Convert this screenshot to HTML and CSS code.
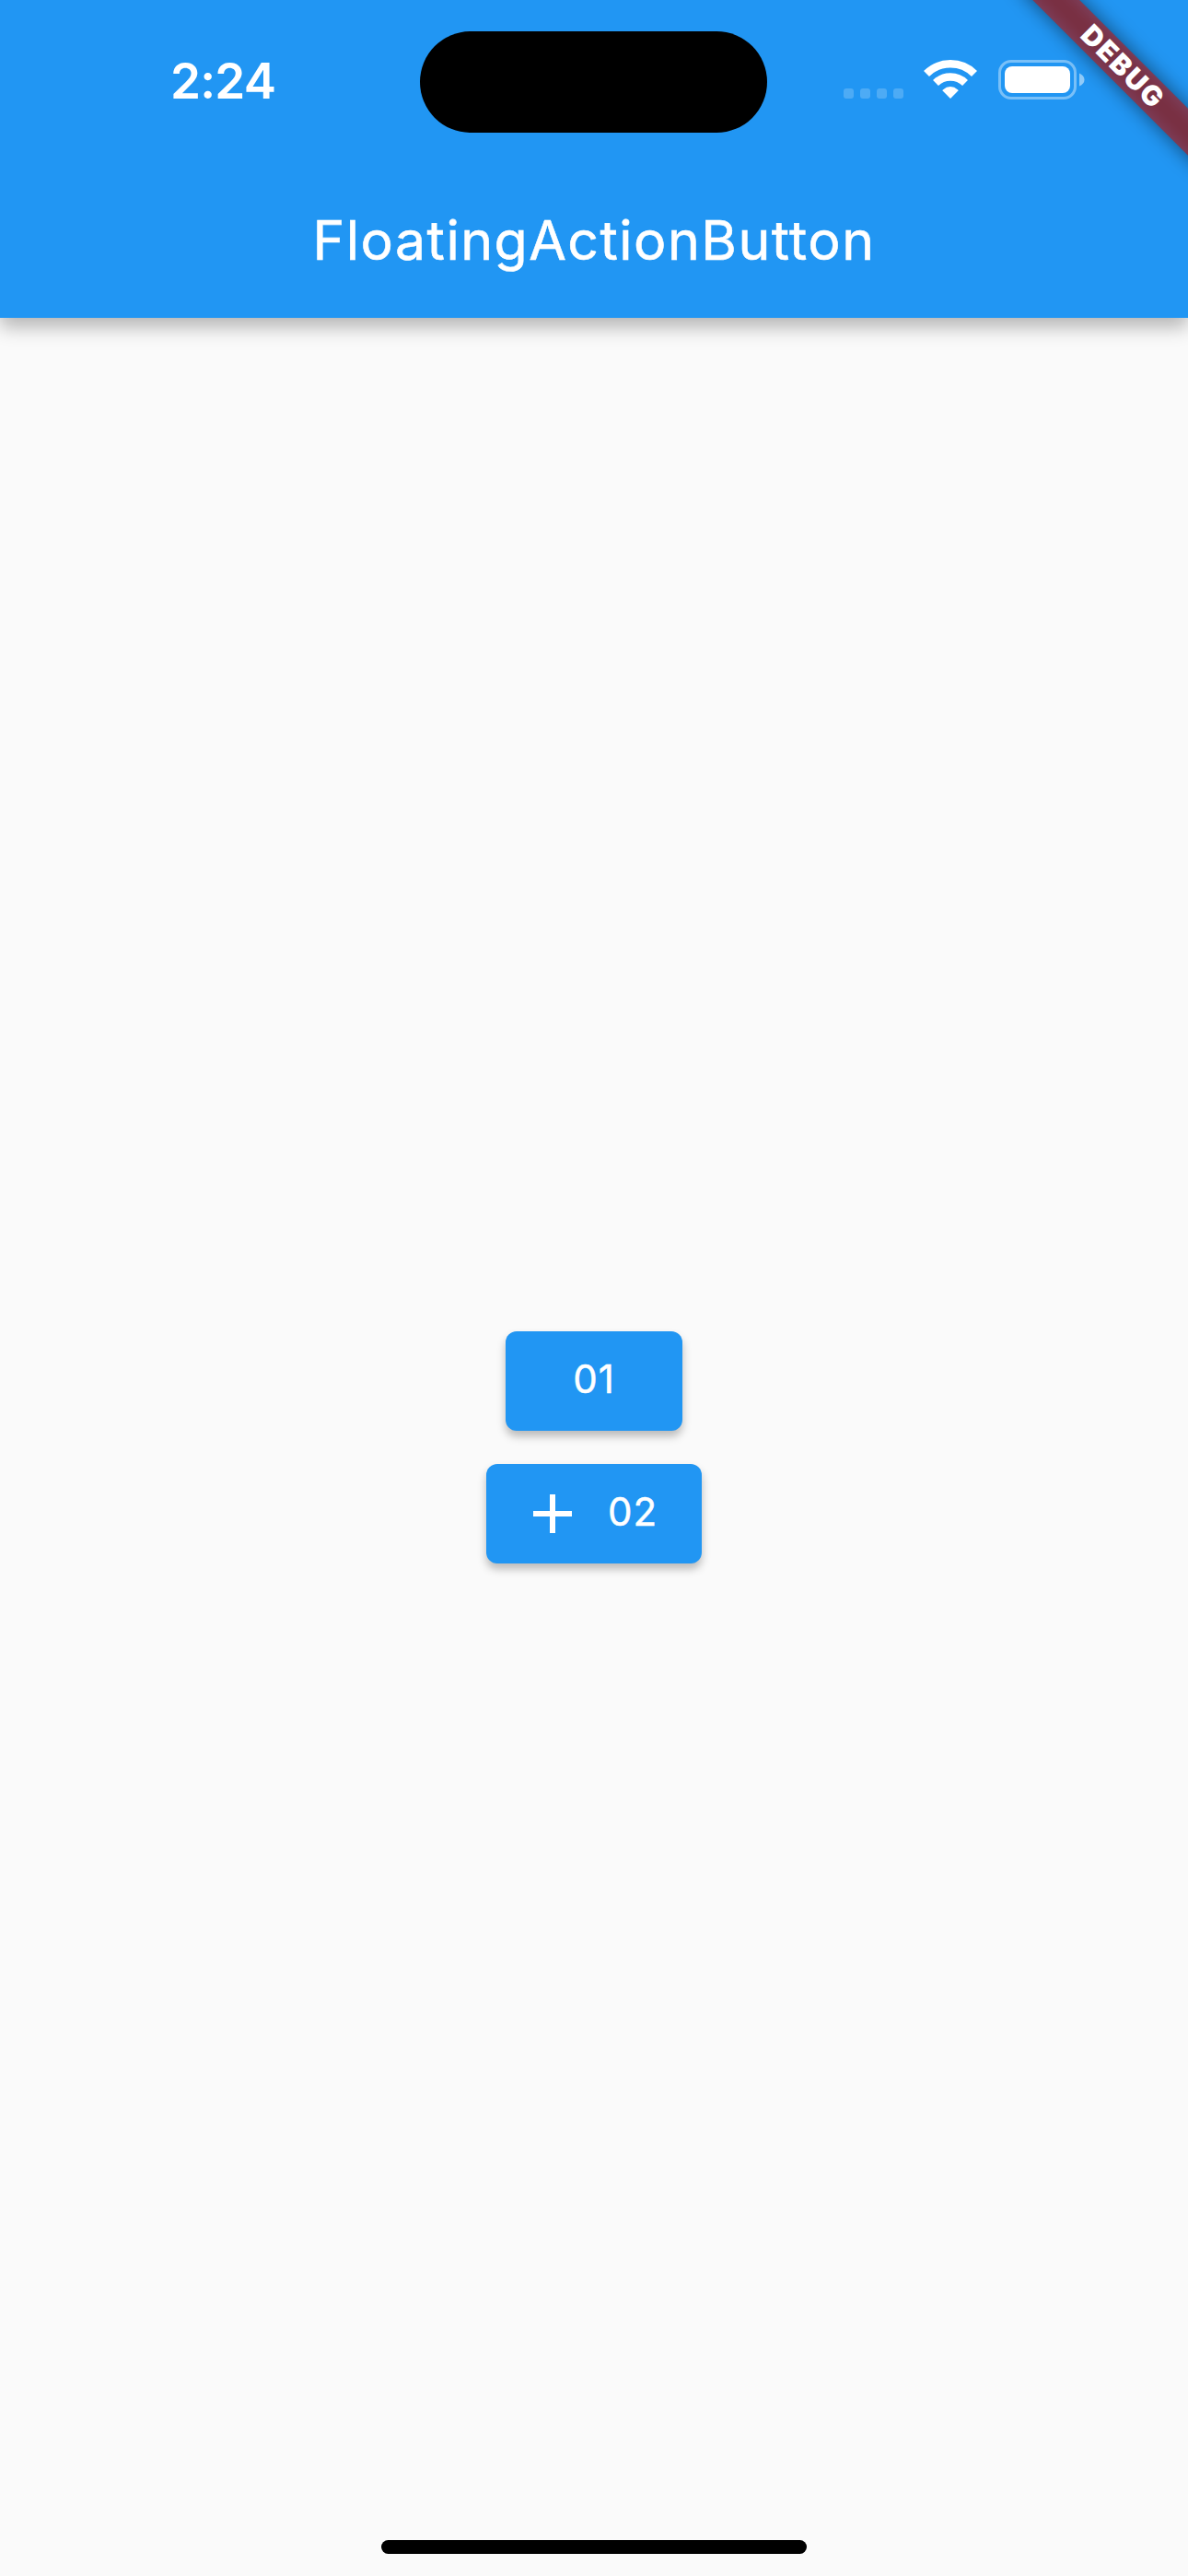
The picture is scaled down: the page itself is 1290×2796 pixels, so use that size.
FILE: index.html
```html
<!DOCTYPE html>
<html lang="en">
<head>
<meta charset="utf-8">
<title>FloatingActionButton</title>
<link rel="stylesheet" href="styles.css">
</head>
<body>
<div class="screen">
  <header class="app-bar">
    <div class="status-bar">
      <div class="status-left"><span class="time">2:24</span></div>
      <div class="island"></div>
      <div class="status-right">
        <div class="cellular"><i></i><i></i><i></i><i></i></div>
        <svg class="wifi" viewBox="0 0 58 42" width="58" height="42">
          <g fill="none" stroke="#fff">
            <path d="M3 15A37 37 0 0 1 55 15" stroke-width="8.5"/>
            <path d="M13 25A23 23 0 0 1 45 25" stroke-width="8.5"/>
          </g>
          <path d="M29 42L20.6 33.6Q20.2 33 20.8 32.5Q29 25.700 37.200 32.500Q37.800 33 37.400 33.600Z" fill="#fff"/>
        </svg>
        <svg class="battery" viewBox="0 0 94 43" width="94" height="43">
          <rect x="1.500" y="1.500" width="82" height="40" rx="12.500" fill="none" stroke="#fff" stroke-opacity=".4" stroke-width="3"/>
          <rect x="7" y="7" width="71" height="29" rx="8" fill="#fff"/>
          <path d="M88 14.500Q93.500 17 93.500 21.500T88 28.500Z" fill="#fff" fill-opacity=".5"/>
        </svg>
      </div>
    </div>
    <div class="toolbar"><h1 class="title">FloatingActionButton</h1></div>
  </header>
  <main class="content">
    <button class="button button-plain"><span class="label">01</span></button>
    <button class="button button-icon">
      <svg class="plus" viewBox="0 0 42 42" width="42" height="42"><path d="M18 0h6v18h18v6H24v18h-6V24H0v-6h18z" fill="#fff"/></svg>
      <span class="label">02</span>
    </button>
  </main>
  <svg class="debug-banner" viewBox="0 0 240 240" width="240" height="240">
    <defs><filter id="soft" x="-20%" y="-150%" width="140%" height="400%"><feGaussianBlur stdDeviation="10.500"/></filter></defs>
    <g transform="translate(168.350 71.650) rotate(45)">
      <rect x="-140" y="-18" width="280" height="36" fill="#000" fill-opacity=".5" filter="url(#soft)"/>
      <rect x="-140" y="-18" width="280" height="36" fill="#b71c1c" fill-opacity=".627"/>
      <text class="debug-text" x="1.500" y="10.500" text-anchor="middle">DEBUG</text>
    </g>
  </svg>
  <div class="home-indicator"></div>
</div>
</body>
</html>
```
FILE: styles.css
```css
* { box-sizing: border-box; }
body { margin: 0; background: #fafafa; font-family: Inter, "Liberation Sans", sans-serif; }
.screen {
  position: relative;
  display: flex;
  flex-direction: column;
  width: 1290px;
  height: 2796px;
  overflow: hidden;
}
.app-bar {
  display: flex;
  flex-direction: column;
  height: 345px;
  background: #2196f3;
  color: #fff;
  box-shadow: 0 10px 19px rgba(0, 0, 0, .28);
}
.status-bar {
  display: grid;
  grid-template-columns: 456px 377px 457px;
  height: 177px;
  padding-top: 34px;
}
.status-left { padding: 22px 0 0 185px; }
.time { font-size: 53px; line-height: 64px; font-weight: 560; letter-spacing: -.8px; }
.island { height: 110px; border-radius: 55px; background: #000; }
.status-right { display: flex; align-items: flex-start; padding: 31px 0 0 83px; }
.cellular { display: flex; gap: 7px; padding-top: 31px; }
.cellular i { width: 11px; height: 11px; border-radius: 3px; background: rgba(255, 255, 255, .2); }
.wifi { margin-left: 22px; }
.battery { margin-left: 23px; }
.toolbar { display: flex; flex: 1; align-items: center; justify-content: center; }
.title { margin: 0; font-size: 59px; line-height: 72px; font-weight: 400; letter-spacing: 1.480px; -webkit-text-stroke: .6px #fff; }
.content { display: flex; flex: 1; flex-direction: column; align-items: center; justify-content: center; gap: 36px; }
.button {
  display: flex;
  align-items: center;
  justify-content: center;
  height: 108px;
  padding: 0;
  border: 0;
  border-radius: 12px;
  background: #2196f3;
  color: #fff;
  font: 400 42px/50px Inter, "Liberation Sans", sans-serif;
  letter-spacing: 1px;
  box-shadow: 0 6px 10px rgba(0, 0, 0, .26);
}
.label { padding-bottom: 3px; -webkit-text-stroke: .5px #fff; }
.button-plain { width: 192px; }
.button-icon { width: 234px; justify-content: flex-start; gap: 39px; padding-left: 51px; }
.debug-banner { position: absolute; top: 0; right: 0; }
.debug-text { fill: #fff; font: 900 30px Inter, "Liberation Sans", sans-serif; letter-spacing: 1.900px; }
.home-indicator {
  position: absolute;
  left: 414px;
  bottom: 24px;
  width: 462px;
  height: 15px;
  border-radius: 8px;
  background: #000;
}
```
